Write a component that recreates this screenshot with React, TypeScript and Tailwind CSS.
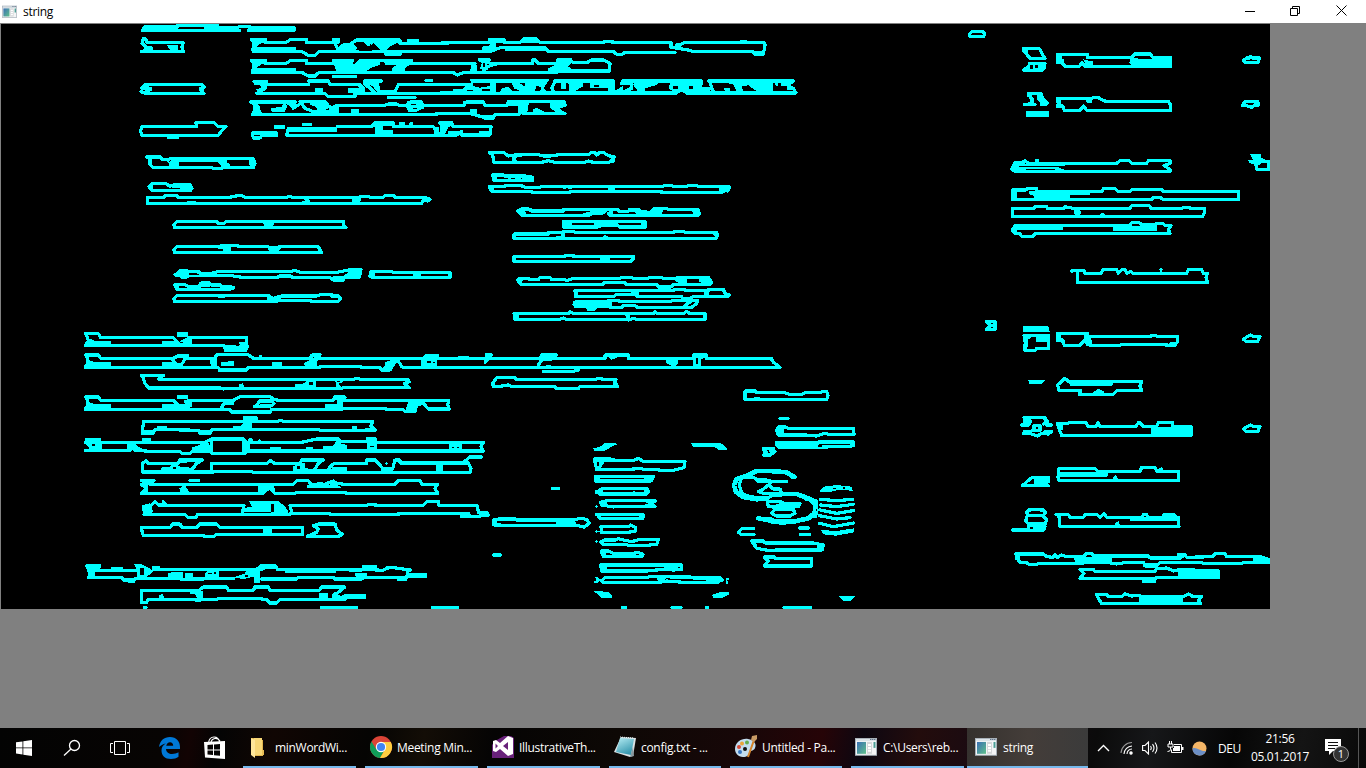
import React from "react";

type Region = { x: number; y: number; lines: string; fills: string; bold?: string; holes?: string };

// Contour data, stored per region at three units per pixel.
const regions: Region[] = [
  {
    x: 0, y: 0,
    lines: "M428 91L434 81H532V77H652V82H712L720 79H745L757 83H882V91H745M428 91H718 M424 154H550L546 141L550 128H442L436 116H430L426 130L440 142L455 146 M755 119H797V127H859L871 119H920V127H1000M757 119L763 135L757 150M760 154H905L925 166H945L957 154H1350 M1000 118H1015V127L1005 130L1012 145L1020 152M1010 152L1030 135L1050 133L1070 120H1200V131H1335L1350 128M1225 122H1252M1155 162H1202 M755 182H797V190H859L871 182H920V190H1000M757 182L763 198L757 213M757 217H905L925 228H945L957 217H1350M1000 181H1058L1050 190L1065 200L1080 181H1150H1235V190H1350M1000 229H1066 M423 275L440 281H612L602 270L613 262L605 254H435L425 264L450 268 M762 244H800V254H925M800 250L795 265L770 280H975L985 290H1065V280H1350M925 243H985L990 254H1080L1090 265L1085 280M1092 243H1145M1095 243L1110 265L1122 275M1130 243L1137 275H1185L1195 254H1350M1278 241H1294M1165 293H1245 M752 306H885L878 320L865 310M755 308L775 320L757 343H1310V340H1350M900 304H975L985 318L995 325L1010 316H1155L1165 312H1190L1200 317H1350M885 306L880 325L905 308M905 310L915 325L940 335H1005L1015 318 M426 380H590L588 368H642L655 380H678L662 396L655 406H425L422 392ZM505 413H532 M757 399H830V406H785L780 414H760ZM862 406H1350M865 386L860 404M1012 380H1115L1125 369H1180V380H1300L1310 395L1305 406M1145 370V400M1320 370H1350M1335 372L1325 395L1318 404",
    fills: "M612 76H655V80H714V95H612ZM743 80H818V86H824V79H886V95H743Z M430 135L458 140V155H425L432 146ZM500 135H535V150H510Z M755 115H797V130H785L770 140H760ZM757 142H888V150H905V156H757ZM1020 152L1030 136L1060 130L1072 145L1065 155ZM1068 115H1200V125L1170 140L1160 150H1140L1120 130L1105 140L1085 122Z M755 178H797V193H785L770 203H760ZM757 205H888V213H905V219H757ZM1005 185H1055L1065 198L1080 178H1140V195L1110 205L1100 213H1010L1003 198ZM1150 178H1235V190L1215 205V213H1175V205L1190 195L1155 195Z M423 258L455 260V272L440 280H425L440 268ZM598 262H612V283H600Z M760 240H800V262L780 275L765 270L785 262L780 255H762ZM945 265H970V280H945ZM1045 265H1095V280H1045ZM1065 248H1080L1095 265H1080ZM1090 240H1145V250H1130L1137 275H1130L1118 258L1110 255L1100 265L1090 255Z M760 318L778 320L785 338H757ZM812 325L845 320L852 308L862 318L855 335H815ZM930 305H975L985 325L960 338L945 320L930 315ZM985 315L1018 322V338H990ZM1052 328H1077V340H1052ZM1220 305L1235 300H1265L1272 310V325L1245 337H1225L1218 320Z M785 394H832V408H785ZM822 375H855V388H822ZM905 370H937V378H905ZM862 380H1012V395H865ZM1125 385H1150V390H1180V405H1125ZM1120 365H1180V378H1150L1145 390H1130L1120 375ZM1198 365H1215V380H1198ZM1230 367H1240V382H1220ZM1300 380H1318V402H1305Z",
    holes: "M1234 311H1252L1244 315H1234ZM1240 324H1252V328H1240ZM1112 130L1116 142L1108 140ZM777 133h6v6h-6ZM1098 136L1116 142V152H1078L1082 140Z",
  },
  {
    x: 440, y: 20,
    lines: "M0 70L15 67H148V58H192V68H240L252 57H290L300 67H490L495 64H518V67H693V82L720 86L745 90L760 95H938L945 102H970L975 75L972 67H735L720 75H708M0 95H150L180 83H315L325 94H520L530 103H545L555 97H705M905 64H918 M0 130H105L95 152M0 158H40L52 165L70 158H350V153H508L510 130L490 120H455L440 128H400L390 118H355V130H295L285 120H278V130H150M118 120H148L135 130L140 145L130 152 M0 193H95M0 219H708L725 208L740 219H1068L1060 205L1045 198M345 183H522M345 183L335 205L345 219M548 183H785M545 190L575 190V205L545 218M785 183L780 205H810M805 183H1060M808 183L820 215 M0 257H70L80 245H130L135 257H200L205 245H372L375 255L345 265L375 281H255L262 250M0 281H90L125 290L135 295H160L165 283H235L260 270 M0 308H35L40 320H153L150 345H65V335L50 345L0 346M20 320L10 340",
    fills: "M147 53H192V68H170L165 90H125V80L150 76ZM250 52H290L295 68H232L250 62ZM195 82H315V94H195ZM935 94H975L970 106H940Z M115 115H148V125L140 135H175L140 145L132 153L120 145L125 130ZM92 135H110V155H92ZM350 115H395V130L385 140L400 150H510V158H325V145L345 135Z M90 178H328L320 190L310 205L330 220H40V208H65L80 195L95 190ZM362 184H378V206H362ZM385 188H428V200L405 213H388ZM450 190H510V203H450ZM502 180H525V212L548 198V220H505ZM583 180H660L650 195L615 205V215H595L580 195ZM690 190L720 180H785L778 200L810 205V213L750 215H700L685 205ZM850 203H870V215H855ZM877 190H1000V213H950L935 203L925 196L905 200L910 215L890 213ZM850 180H930V194H890L850 188ZM995 180H1060V190L1050 195L1060 210H1040V198H1010Z M90 268H112V282H90ZM68 242H132V252H68ZM125 285H165V296H130ZM202 242H260V275L250 285L235 280V258H202ZM330 245H375V250L360 262L365 275H345L330 262ZM278 280V270L290 263L320 278V283Z M0 305H37V318L15 322L8 345H0ZM25 333H65V345H25ZM118 332H150V348H118Z",
    holes: "M100 190H150V198L120 203L100 198ZM168 188H215L222 205L238 212H215L205 200L185 205L180 215H168ZM240 190H255V200ZM75 212L100 210V214ZM290 196L305 204L300 214H285ZM125 208H150V214H125ZM462 195H478V200H462ZM700 198H715V206H700ZM748 198h12v8h-12ZM1015 190h7v8h-7Z M128 130h8v10h-8Z",
  },
  {
    x: 960, y: 0,
    lines: "M28 103L35 95H70L74 103L70 110H30Z M190 146H238L255 176H212L190 150M190 210H245L255 190H210L205 200Z M292 164H383V173H515L525 162H572L578 172H632V199H375L365 188L358 199H315L305 185L292 188Z M850 181L860 174H868L872 169L878 174H898L894 187H855Z M205 281H243L248 295L262 308L258 314H245M205 282L215 298L212 312L193 313H225 M292 296H395L400 293H415L430 302L440 304H625L632 315V331H380L370 318L360 331H313L308 318L292 320L295 310Z M847 316L855 305H893L896 315H885L875 322L863 318Z M155 508L165 488H185L195 482L205 490H470L480 482H508L515 490H560L565 482H630V490L612 497L630 508V514H165Z M890 508H926V485H900L888 495Z M157 570H195L205 565H230V575H425L430 566H465L475 575L510 575L515 569H605L610 574H836V598H610L600 592H580L575 598H157Z M157 626H220L225 620H260L262 626H310L315 620L345 626H510L515 617H568L575 626H665L670 622H690V626H734V638L728 649H157Z M425 645h6 M165 677H510L515 668H538L545 674H585L590 671H610L615 677H633L625 688L630 700H225L220 709H185L180 700H165L157 690Z M335 813L345 812H372L375 820H422L430 809H470L475 820L485 809H495L500 820L512 815L520 820H680L685 809H725L730 820H742L738 832L743 847H352V815",
    fills: "M186 143H205V165L212 178L200 172ZM205 187H258V205L248 215H188V205L208 198Z M510 172L545 177H632V202H520L508 190ZM290 162H305V178H312V195L305 195L290 185ZM370 178L400 185V202H380Z M200 280H212L222 298L224 312H195L212 305L215 295L200 290ZM232 283H245L250 298L265 308V315H248L232 298ZM198 334H267V350H198Z M290 294H303V310L312 325H305L290 318ZM378 295H397L395 310H380Z M160 488H185L200 492L290 492L320 485H338L325 495L290 500L315 510V516H165L155 508ZM226 478h12v8h-12Z M870 463H903V472L915 478V484H928V490H905L890 500L885 495L870 490L863 480H880Z M155 566H172V600H155ZM208 572H390V585H330V600H222V588L208 583Z M340 632L352 625L365 637L355 648H345Z M160 678H308V690H172V702H160ZM460 677H590V692H460Z M601 803h4v14h-4ZM598 806h10v4h-10Z",
    holes: "M211 194H218V206H211ZM225 195h10v10h-10ZM178 499H295V502H178ZM198 507H285V510H198ZM390 178H510V182H390Z",
  },
  {
    x: 130, y: 145,
    lines: "M50 36H90L95 42L115 45L120 40H160L200 41H370L375 55L370 68H280L275 71H250L245 68H70L60 58V42Z M57 125L67 115H105L120 123L135 119H180L186 130L182 136H67Z M53 158H100L105 152H140L145 157H300L310 154L335 151L345 157H470L475 154L490 157H600L685 159L690 154H715L720 157H760L765 151H790L795 157H885L900 163L893 168L880 165L875 176H53Z M133 247L132 240L140 230H260L265 236L282 235L287 230H640V243L648 247Z M133 322L132 315L140 305H260L285 301H322L325 305H415L425 312L440 308L450 305H565L570 315L575 322Z M135 390L150 378L165 376L180 380H205L215 386H250L262 380H480L495 376L510 382H620L640 378L660 374H693L688 396H645L640 405H610L600 398H490L480 393H450L440 398H345L330 396L315 394L300 391H180L170 396H155L150 390Z M722 382L725 380H785L790 383H960M722 382L720 394L728 397H960V383 M135 420L145 419H165L180 426H208L213 414H238L245 420H270L275 425H300L311 428L300 433H140Z M133 469L132 462L140 452H415L430 460L455 453H560L570 449H605V453H625L632 461L625 469H545L540 466H450L440 469Z",
    fills: "M118 37H160L200 40H290V52L300 58V66H275L265 52H148V62L135 68H120L115 52L125 46ZM358 42L377 48V62L368 70L357 58Z M125 121L155 117L187 123L190 133L150 136V128H125ZM55 125L68 115V135Z M665 158L690 155L695 165L685 172V178H668ZM520 160H535L542 172V178H512V170L525 168ZM882 155L905 163L895 172L880 162ZM172 169h25v6h-25ZM282 170h34v6h-34Z M262 230H285V240H265ZM395 230H432V240L425 245H405Z M262 308L285 300H302V320H280L278 312H265ZM412 308L430 302L455 308L440 322H420Z M130 388L150 375H190L205 382H230L258 378L262 385L240 394H180L170 398H150L148 392H132ZM608 393H640L660 378L695 374L690 398H672L670 388L645 395V408H608ZM718 378H735V398H722ZM848 385H872V398H848Z M133 415L150 420L142 435H135ZM205 418H240V425H205Z M262 450H285V460H265ZM412 452L430 460L442 450L458 456L440 470H412Z",
    holes: "M178 384H198L208 389H178Z",
  },
  {
    x: 480, y: 145,
    lines: "M28 22H70L85 33L95 32L103 30L175 29L190 33H210L240 29H325L335 22H345L350 30L360 22H370L385 32L402 35L400 48L385 52H340L325 48L315 52H225L205 47L185 52H42L38 30ZM108 32L100 42L108 52 M38 90H70L75 93H135L158 97V106H42Z M28 125H70L80 121H120L140 128H175L185 125H548L555 121H575L580 125H618L625 121H650L655 125H747V132L730 140L722 143H545V139H270L268 143H158L155 139H35L30 130Z M112 198L125 192H145L155 198H250V193H412L418 199H445L450 193H475L485 200L510 202L522 190H560L565 194H655L658 207L655 211H390L385 205M112 198L125 211H325L335 206H365L380 195 M250 230H495L497 246H420L412 240H360L352 246H250Z M102 267H205V262H245L250 259H280L285 262H580L585 259H612L615 262H710L712 272L708 280H102Z M102 335H255V331H280V335H460V342L452 349H102Z M112 405L120 400H145L150 404H175L180 397H210L215 404H250L262 406L280 400H420L425 397H455L460 400H505L508 397H545L550 400H585L600 397H685L695 413L690 419H580L572 426H535L530 419H440L432 412H372L368 419H125Z M285 437H580L585 433H612L617 437H680L685 433H730L735 445L748 450L745 454H640L630 461H608L605 454H470L465 449H408L402 455H287Z M385 466H415L420 470H570L578 466H653L650 475L635 487H612L620 478L632 470M390 487H425L430 482H465L472 487H615 M102 506H265L270 500L280 506H520L525 500L532 506H610L620 499L630 506H675V523H470L460 520L445 525L438 523H260L250 519L240 523H105ZM440 508L446 520",
    fills: "M95 32H112L105 42L115 52H95ZM385 28L406 36L400 52H385L392 40Z M105 96H158V105H140L125 100L105 106ZM36 88H50V108H36ZM84 98h10v5h-10Z M385 125H405V140H385ZM718 125H748L735 138L728 145H718ZM28 122H42V142H30ZM248 127h10v4h-10ZM265 128h12v4h-12ZM738 138h8v3h-8ZM741 135h3v9h-3Z M108 198L125 190H155V198H135L140 212H120ZM308 205L335 198L340 195H375L365 208H330L325 214H310ZM388 198H398V213H388ZM445 190H480V200H490L498 205L520 200V190H560L548 198L545 208H480L465 205V200H445ZM635 192H660V212H640Z M248 227H275V250H248ZM342 230H362V248H350L342 240ZM482 228H498V250H485Z M367 275L375 269L385 276ZM690 262H715L710 280L700 270ZM240 260H255V283H245ZM228 273h14v5h-14Z M360 335H390V350H360Z M108 406L120 398H145L125 408L130 420H122ZM585 400L600 395H620V413L605 418L587 410ZM655 396H685L697 412V421H675L658 410Z M453 436H477V450H453ZM670 437H690L685 450H672ZM283 435H295V457H287ZM728 435L755 450L748 458H725L735 450Z M280 468L290 465H380L395 463V490H350L345 497H322L318 490H285L277 480Z M98 503H115L120 525H105ZM435 506H452L446 520ZM228 518H255V524H228Z",
  },
  {
    x: 70, y: 325,
    lines: "M47 26H85L92 38H310L325 55M355 37H530V60L533 65H510M47 61H462M50 30L55 48L47 60 M47 90H85L92 100H310L320 95H350L340 110L335 118L320 118L308 105M345 100H435L440 89H535L550 100H720L730 88H750L738 105L735 122M735 100H1290M47 128H445L450 135H530L535 127H750V124H870L875 127H930L935 135H960L970 110L985 108L995 125L1005 128H1290M50 95L55 112L47 125M440 92L425 115L435 127M572 94V100M1168 97H1192 M215 152H280L265 162M268 163H850L862 160L870 163H1012L1018 170L1003 176L1018 188H820L815 190H480L460 192L450 189H235L225 175L218 155 M47 216H85L92 226H310L325 240M355 226H490L510 215H600L610 222L625 226H790L795 216H825L820 226H1020H1136L1133 240L1138 252H1075L1060 235L1040 240L1035 260H1005L1000 254H950L945 250H815V253H605L600 262H485L480 253H47M50 220L55 238L47 250M555 245L570 228H605L612 235L605 242H575M555 245H600 M217 318L220 295V290H525V280H560L545 290H620L630 286L645 290H908L903 303L915 315L755 317L745 314H425L420 325H390L385 316L300 314H255L250 325H217Z M47 352H405L425 342H520L530 352H695L740 342H805L812 350H890L893 340H915L918 352H1240L1233 365L1240 378H525V385H425L415 365L408 352M47 377H180L190 365L200 375L215 377L250 380H330L335 385H360L368 378H420M425 345V380M522 345V380M537 345h8M568 348v4 M218 440V415L228 408L235 415H325L330 405H398L380 415L365 435L335 430M218 441H410L545 439L550 442H1200L1203 430L1195 415L1185 408L1200 396H1235M425 435V416H590L600 406L615 416H690L695 405H760L745 415L735 432M770 440L785 420L795 415H890V405H915L925 415L940 432H968L975 405H990V414H1190 M215 467H252L240 478H670L680 467H715L720 475L745 485L790 468L800 475L825 478H975L985 467H1050L1055 478H1103L1095 490L1103 505H830L825 502H680L675 505H615L600 490L590 495L580 505H215L230 490L215 480M360 466H385 M225 568L220 545H240L255 530L265 540H290L280 530M285 542H522L518 560M222 568H345L355 578H378L382 568H660V565H780V568H985V565H1195L1200 575H1175H1215L1255 570L1250 562H1225L1222 542H1130L1105 540V530H1070L1060 541H925L900 538L885 542H660L665 562 M215 608H300L308 597H330L335 607H380L390 597H440L450 607H697V628H440L430 635H402L400 631H220L215 615ZM585 608V628H695M730 602L745 597H795L800 615L817 628L805 634H712L740 622L745 612Z M50 723H90M55 736H200M55 757H155L160 765H195V760H335V763L490 760M250 733H560L575 721H615L622 733H640L875 735M575 762H680L685 757H790L795 762H875L880 758H1010L1015 735H1022L970 728L950 729L940 736L880 733 M215 832V797H385L400 786H470L475 796H550L555 786H595L600 796H748L755 786H825L810 798L795 810L825 823H630L620 834H600L590 824L560 820H445L440 823H235L230 832H215 M224 847h4M755 847H860M1088 847H1162",
    fills: "M50 38L70 45L75 48H122V62H50ZM275 48H320V60H275ZM320 22H355V35H320ZM345 40H367V60H325V52ZM458 60L510 62L505 50H530L538 65L530 80H462Z M50 102L75 112H122V124H50ZM275 112H320V126H275ZM605 112H635V125H605ZM452 110H470L493 108V124H452ZM702 115L730 98H740V124H705ZM945 112L970 103L985 105L965 135H935L945 120ZM1052 105L1065 88H1108V98L1102 105V122H1052ZM420 105L440 98V122H422ZM320 88H357V98L340 100H320ZM1245 88h22v6l-18 22h-8ZM718 86h35v10h-30ZM445 130H532V140H445Z M508 178L518 175L524 188H508ZM676 176H700L712 165H738V188H676ZM795 165L805 172L815 165L820 170L805 177L815 188H800Z M50 228L75 238H122V250H50ZM275 238H345L340 225H367V245L350 252H275ZM320 211H355V223H320ZM450 245L460 230L492 226V240H465L460 252H450ZM485 256H605V265H485ZM766 238H800V226L820 222V250H766ZM1015 228H1060L1045 235L1030 260H1005ZM788 212h38v14h-38ZM550 240h25v10h-25Z M215 315H255V328H215ZM260 302H292V313H260ZM385 315H425V328H385ZM488 302H512L525 292V275H560V285L545 295V312H488ZM845 302H862V313H845ZM518 274H562V286H518Z M45 338H92V350H95V375H62L48 358ZM172 352L190 350L200 362L218 372V382H195L185 372H170ZM365 368L415 350L420 378H365ZM600 366H632V378H600ZM707 366H728V378H707ZM760 362H790L800 345H812V355L830 360V375H760ZM890 338H915V352L922 358V375H892ZM1138 357H1175V376H1138ZM217 338h25v10h-25ZM520 352L540 355V375H520Z M272 428L300 425L305 418H320L330 425H358V440H272ZM325 402h35l-10 12h-25ZM668 425L690 415H705V430L740 432H830V443H670ZM1098 416H1120V440H1098ZM888 402H920V412H888ZM970 402h22v10h-15ZM932 415l10 12v14h-10ZM785 425h45v15h-45ZM948 411h3v9h-3ZM945 414h9v3h-9Z M210 475L235 465H250L235 480V500L215 505L228 492ZM328 490L345 480L357 500H330ZM565 482H610L618 500L595 492L582 505H565ZM712 480L750 470L780 480L795 465L800 480L812 485V490H712Z M218 540L240 535L250 560L235 568H222ZM537 527H625L645 545L655 560V570H625L600 562H515V550L545 545Z M582 610H605V630H582Z M48 718H93V728L75 740V752L55 755V738L48 730ZM122 725H160V735H122ZM193 718H215L235 728L250 738L245 745L230 755H200V735ZM245 722h25v8h-25ZM155 760H195V775H178ZM295 745L310 740H340V758H295ZM345 745H368V758H345ZM405 745L415 735H448V758H405ZM490 758L525 745L530 735H560L570 720H620V732H590L570 740V775H552V755L520 762ZM645 735H797V745H645ZM855 745H890L895 758H858ZM875 720H920V733H875ZM980 755H1012V768H980ZM1015 745H1070V758H1015Z M268 810L278 807L285 822H268ZM358 797H400V820L390 832H375V823H385L375 808H360ZM748 805H775V820H748ZM785 808L795 800L805 815L825 808H887V821H785Z",
    holes: "M1070 107h14v8h-14ZM1090 110h6v5h-6Z M716 171h14v10h-14Z M66 358h8v4h-8ZM900 363h12v4h-12ZM1145 366h8v4h-8ZM1162 366h6v4h-6Z M308 427h10v4h-10ZM680 424h10v8h-10Z M603 536h10v24h-10Z M211 730h10v20h-10ZM415 743h12v5h-12ZM432 741h6v6h-6ZM525 750h8v6h-8Z M330 50h8v4h-8Z",
  },
  {
    x: 480, y: 345,
    lines: "M0 40H20L35 30M35 40H180L185 30H230L215 42L185 45L175 60M215 40H375V30H445V40H640V30H680V40H875L880 52L900 67H290M0 67H290L295 75L280 79H190M202 64h6 M38 115L50 98H105L108 104H345L352 100H365L368 104H408L406 115L413 124H300L295 131H228L225 125H95L85 120L60 124H40Z M795 138H825L830 143H915L930 149H965L975 143H1020L1030 139H1040L1044 152L1040 163H795Z M835 160H825 M900 220H924 M890 255L895 246H915L925 250H1120L1122 268H1045L1035 265L1010 273L975 270H895Z M1015 291H1120V302L1100 305H1030 M850 310H880V320H885L870 330H850L860 322Z M343 342H390L395 347H460L475 340L490 349H615L612 368L580 376H545L520 373H490L480 370L440 374H350Z M347 394H520L513 408H347Z M352 442L365 431H502L506 440L500 447H360L352 442 M362 472L380 467H525L510 475L525 484H420L400 486L365 480Z M352 508H440L490 510L488 521H362L352 510 M363 545H445L452 540L467 548V558L440 563H365Z M362 590L375 585H405L415 581L430 585L455 590L480 583H535L530 598L490 602H445L440 598H370Z M364 618H385L400 625H460L475 622L489 628L485 635H370Z M362 660H605V673H550L500 678H365Z M365 708L375 698H500L510 695H550L580 696H630L640 699H720L726 705L700 712H610L560 708L540 712H370Z M428 788h8M576 787H603M680 788h2M912 787H991 M217 430H236M40 630H63 M42 540L40 525L55 522H105L110 525H280L300 520L320 523L328 535L312 546L290 541H95Z M785 395L778 420L785 445L810 455L850 460M790 398L820 398L850 410H920M835 440L850 432L865 420L880 432H900L905 445H850Z M855 462L880 450M862 470H900L920 477L960 475L955 485H865ZM875 505L885 493H940L945 505L930 513H890ZM905 477L880 487M870 415L860 425 M1022 463L1070 467L1118 463M1022 480L1070 485L1120 478M1020 495L1070 505L1120 497M1018 512L1070 522L1110 518M1018 535L1060 545L1120 534 M820 551H785L775 562L785 569H822M959 549H986M962 569H988 M815 588H850L855 594H1000L1030 600L1025 615H890L870 617L830 610Z M853 636H885V641H995V663H853L863 650Z",
    bold: "M943 396L920 382L870 378H830L800 392L770 402L762 420L768 441L790 456L830 463L860 460M880 450L910 447H950L990 462L1008 480L1003 505L985 520L940 530H915L880 528L835 520",
    fills: "M180 26H232V36L205 45H180ZM372 27H447V36H415L395 44L385 36H375ZM555 42H593V58L580 66L560 55ZM637 28H680V38L662 42V62H640ZM865 40L905 65L890 68ZM15 25h22v8l-18 20h-8Z M398 102H412V127H398ZM36 108h10v18h-10Z M888 245H912V270H890ZM885 287H1050V292H1030L1015 300V306H1045V312H895L885 300ZM845 305H862V318L850 330ZM865 310h14v14h-10Z M340 310L360 305L375 294H408L410 299L400 302L375 317H342ZM632 294H722L742 310V314H715L705 307H640Z M340 338H405V350H375L362 370V376H348L340 350Z M343 392H365L355 412H343ZM485 392H528L515 410H492V398H485Z M345 435H370V447H345ZM440 444L465 438L470 448H440ZM490 430h18v14h-14Z M358 470H380V483H362ZM480 465H530V472L515 478L530 483H485L505 475ZM345 482h10v4h-10ZM348 479h4v10h-4Z M345 505h15v8h-15ZM475 508h18v14h-14Z M345 558h20v3h-20ZM348 555h4v9h-4ZM345 588h9v3h-9ZM348 585h3v9h-3Z M362 615H378V638H368Z M360 657H380V678H365ZM555 660H585L600 672L580 682L565 675H552ZM440 672h50v5h-50Z M530 697H560L550 712H535ZM672 708L700 700L690 697H725L728 708L715 716H675ZM345 695h7l8 10l-8 10h-9v-8h4v-5ZM355 703h12v6h-12ZM738 700h8v6h-4l4 12h-8ZM600 712h90v6h-90Z M338 737H370V742H385L395 752V758H362L350 745ZM696 750L718 742H748V748L725 759H700ZM1078 754H1125L1110 768H1090Z M225 525h60l5 15h-60ZM38 525h15l-8 18h-8Z M800 385L830 373H900L950 390L945 402L935 402L920 385H830L800 395ZM815 398H850L875 404H925L915 415H835Z M828 515H870L900 528L940 522H985L960 532L910 540L870 535ZM955 445L1015 465L1012 520H1000V470L975 468Z M1018 438L1030 425L1070 420L1115 425L1118 437L1075 435L1045 442H1020ZM1022 555L1070 558L1122 550V562L1068 572L1030 568Z M812 585h15l5 22h-10ZM1012 593H1033V618H1012Z M850 632h12l8 15l-10 18h-10l8-15Z",
    holes: "M647 40h8v18h-8Z M352 350h5v14h-5Z M766 420h6v4h-6ZM1007 492h5v6h-5ZM1060 429h8v4h-8ZM1088 427h6v6h-6Z",
  },
  {
    x: 960, y: 310,
    lines: "M192 76H266V115H230L225 122H195V105L200 92Z M292 71H383V79H570L580 76L595 79H652V95L645 106H620V103H485L480 106H390L375 90L360 106H313L308 90L293 92Z M850 88L862 80L872 75L880 80H900L893 94H858Z M293 225L315 205L325 214H545L540 228L545 241H472L460 253H358L362 241H297Z M192 322H255L262 335L250 342M185 345H205L212 335M258 345H275M190 370H205L220 360M255 365H275L265 372L245 370M215 372L232 378L245 370M222 346H240V362H222Z M292 340H320L330 338H378L383 349H408L414 337L420 349H528L535 338H540L550 349H590L595 338H638V349H693V377H305L297 355Z M850 357L862 350L872 345L880 350H900L893 365H858Z M295 490L297 475H405L415 485H540L545 472H585L590 484H655V511H297L293 500L305 495H440 M187 527L215 503H265V515L250 518L265 527Z M205 600H250L257 608L250 616H205L200 608ZM200 620L197 632L205 642H255L260 630L250 618M205 650H255L250 660H157 M288 614H325L330 622H370L375 614H412L420 622L432 610L440 622H545L550 614H560L565 622H608L612 614H643L648 622H655V648L657 649H300L297 620 M167 732H250L260 740L278 742L285 735L292 742L305 735L320 740H370L380 730H395L402 738H565L570 744H660L675 735L680 742L758 740L765 731H795L800 740H900L925 748V757H850L845 760H730L725 757H600L590 768H555L550 757H500L470 762L440 757L320 760H235L230 764H208L200 758H180L170 740 M360 778H400L405 785H585L590 776L620 774L640 783L660 778H700V783H775V802H590L580 815H550V805H360L372 790Z M410 853H440L445 860H485L495 852L515 858L535 856L545 860H670L685 852L700 860H725L715 870L722 881H425L415 865Z",
    fills: "M75 31H107L111 35V58L107 62H75V55L83 46L75 39Z M190 49H265L269 65H188V52Z M188 73H215V82L205 88V110H192ZM228 78H268V95H228Z M290 68H304V82L312 98L305 98L290 90ZM372 76H385L395 90V108H380L370 95ZM632 95h20l-4 14h-26Z M205 211H254L245 223H208Z M325 212H467L455 227H330ZM397 248L415 236L432 245V255H397Z M190 320H215L208 340L190 338ZM190 360H215V374H188ZM245 322l20 15h-10Z M290 338H308V360H300L290 352ZM572 352H695V378H572Z M300 487H445V496H300ZM590 482L605 470L615 488H590ZM460 500L468 495L476 510H460Z M222 503H265V515L250 518L265 525H222Z M200 642H258V660H200Z M507 622H640V614H650L658 635L650 642V632H510ZM610 612H645V628H610ZM465 640L475 633L482 648H467Z M165 728H180V755L165 748ZM340 740H455V756H345ZM552 758H593V772H552ZM650 730H675V740H650ZM880 744H925V762H905L880 752Z M655 783H778V804H655ZM548 800H588V818H548Z M537 860H668V882H537Z",
    holes: "M92 38h6v4h-6ZM92 50h6v4h-6Z M305 480h42v3h-42ZM360 480h25v3h-25Z M210 652h8v4h-8ZM212 603h28v3h-28Z M228 352h6v5h-6Z",
  },
];

function Contours() {
  return (
    <svg className="block" width="1269" height="585" viewBox="1 24 1269 585" shapeRendering="crispEdges">
      {regions.map((r) => (
        <g key={`${r.x}-${r.y}`} transform={`translate(${r.x} ${r.y}) scale(0.333333)`}>
          <path d={r.lines} fill="none" stroke="#00ffff" strokeWidth="9.7" strokeLinejoin="round" strokeLinecap="round" />
          {r.bold && <path d={r.bold} fill="none" stroke="#00ffff" strokeWidth="14" strokeLinejoin="round" strokeLinecap="round" />}
          <path d={r.fills} fill="#00ffff" />
          {r.holes && <path d={r.holes} fill="#000000" />}
        </g>
      ))}
    </svg>
  );
}

function AppIcon({ size }: { size: number }) {
  return (
    <svg width={size} height={size * 0.9} viewBox="0 0 22 20" preserveAspectRatio="none">
      <defs>
        <linearGradient id="panel" x2="1" y2="1"><stop stopColor="#3b6fb5" /><stop offset="1" stopColor="#5fc08a" /></linearGradient>
      </defs>
      <path fill="#a9b2ba" d="M0 1h22v18H0z" />
      <path fill="#f4f5f6" d="M1 4h20v14H1z" />
      <path fill="#dce4ea" d="M1 2h20v2H1z" />
      <path fill="#63758a" d="M15 2h1.500v1H15zM17 2h1.500v1H17zM19 2h1.500v1H19z" />
      <path fill="url(#panel)" d="M2 5h9v12H2z" />
      <path fill="#d4d6d8" d="M12 5h5v12h-5z" />
      <path fill="#fff" d="M13 7h3v2h-3zM13 10h3v2h-3zM13 13h3v2h-3z" />
      <path fill="#4c9f96" d="M18.500 5h2v6h-2z" />
    </svg>
  );
}

function FolderIcon() {
  return (
    <svg width="24" height="24" viewBox="0 0 24 24">
      <path fill="#e2b54d" d="M4 3h11v2h1v16H6z" />
      <path fill="#f8d777" d="M7 3h8v17H7z" />
      <path fill="#ffe69a" d="M4 3l4 2v18l-4-3z" />
      <path fill="#e9bd56" d="M15 15h2v5h-2z" />
    </svg>
  );
}

function ChromeIcon() {
  return (
    <svg width="24" height="24" viewBox="0 0 24 24">
      <circle cx="12" cy="12" r="11" fill="#db4437" />
      <path fill="#0f9d58" d="M2.500 6.500A11 11 0 0 0 11 23l5-8.500-4-2.500-5 2z" />
      <path fill="#ffcd40" d="M12 7h9.800A11 11 0 0 1 11 23l5-8.500z" />
      <circle cx="12" cy="12" r="5.200" fill="#fff" />
      <circle cx="12" cy="12" r="4.100" fill="#4285f4" />
    </svg>
  );
}

function StudioIcon() {
  return (
    <svg width="24" height="24" viewBox="0 0 24 24">
      <path fill="#68217a" d="M1 10l3-4 9-5h7l3 2v20H1z" />
      <path fill="#fff" fillRule="evenodd" d="M17 1l5 2v16l-5 2-8-7-4 3-3-1V6l3-1 4 3zM4.500 8.500v5L7 11zM17 7l-5 4 5 4z" />
    </svg>
  );
}

function NotepadIcon() {
  return (
    <svg width="24" height="24" viewBox="0 0 24 24">
      <defs><linearGradient id="pad" x2=".5" y2="1"><stop stopColor="#b6edf4" /><stop offset="1" stopColor="#3798af" /></linearGradient></defs>
      <path fill="#dce2e4" d="M8 2l15 1-3 18-3 1-16-5z" />
      <path fill="url(#pad)" d="M7 3l14 1-3 16-15-3z" />
      <path fill="none" stroke="#e8fafc" strokeWidth="1" strokeDasharray="1 1" d="M7 2l14 1" />
      <path fill="#87989e" d="M20 12l1 9-4 1z" />
    </svg>
  );
}

function PaintIcon() {
  return (
    <svg width="24" height="24" viewBox="0 0 24 24">
      <path fill="#c3ddef" d="M1 14C1 7 8 3 14 4c6 1 9 5 7 9-1 3-4 2-5 4-1 3-3 5-7 5-5 0-8-4-8-8z" />
      <circle cx="5" cy="12" r="2" fill="#d74a38" /><circle cx="8" cy="8.500" r="2" fill="#e9a438" />
      <circle cx="13" cy="7.500" r="2" fill="#64ad4d" /><circle cx="6" cy="17" r="2" fill="#3776c3" />
      <circle cx="11" cy="14" r="2" fill="#111" />
      <path stroke="#d58328" strokeWidth="2" d="M20 5l-6 17" />
      <path fill="#c99b65" d="M18 1l5-1v4l-3 3-3-2z" />
    </svg>
  );
}

const tasks = [
  { label: "minWordWi...", icon: <FolderIcon />, box: "ml-2 w-[113px] pl-1" },
  { label: "Meeting Min...", icon: <ChromeIcon />, box: "ml-[9px] w-[113px] pl-1" },
  { label: "IllustrativeTh...", icon: <StudioIcon />, box: "ml-[9px] w-[113px] pl-1" },
  { label: "config.txt - ...", icon: <NotepadIcon />, box: "ml-[9px] w-[112px] pl-1" },
  { label: "Untitled - Pa...", icon: <PaintIcon />, box: "ml-[9px] w-[112px] pl-1" },
  { label: "C:\\Users\\reb...", icon: <AppIcon size={22} />, box: "ml-[9px] w-[113px] pl-1" },
  { label: "string", icon: <AppIcon size={22} />, box: "ml-[3px] w-[121px] pl-2 bg-linear-to-r from-[#35312e] via-[#443d39] to-[#3b3b3b]" },
];

function Taskbar() {
  return (
    <footer className="flex h-10 shrink-0 bg-[linear-gradient(100deg,#030303_0,#070403_12%,#120303_14%,#040404_16%,#100603_20%,#050403_27%,#130d06_31%,#050404_36%,#0d0805_45%,#170708_54%,#260407_60%,#0d0711_63%,#230c0c_67%,#170a14_73%,#0b0b0b_80%,#161719_84%,#060606_90%,#141414_95%,#090909_100%)] text-xs text-white">
      <div className="flex w-12 items-center justify-center">
        <svg width="16" height="16" viewBox="0 0 16 16" fill="#fff"><path d="M0 2.300l6.500-.9v6.100H0zM7.300 1.200L16 0v7.500H7.300zM0 8.300h6.500v6.200L0 13.600zM7.300 8.300H16V16l-8.700-1.300z" /></svg>
      </div>
      <div className="flex w-12 items-center justify-center">
        <svg width="18" height="18" viewBox="0 0 18 18" fill="none" stroke="#fff" strokeWidth="1.300"><circle cx="11.500" cy="6.500" r="5" /><path d="M8 10L1 16.500" /></svg>
      </div>
      <div className="flex w-12 items-center justify-center">
        <svg width="20" height="14" viewBox="0 0 20 14" fill="none" stroke="#fff"><path d="M4.500.5h11v13h-11zM3 2.500H.5v9H3M17 2.500h2.500v9H17" /></svg>
      </div>
      <div className="flex w-[50px] items-center justify-center">
        <svg width="21" height="22" viewBox="0 0 21 22"><path fill="#0078d7" d="M0 10C1 3.500 5 0 11 0c6.500 0 10 4.500 10 10v2H7c.2 3.500 3 5 6 5 2.500 0 4.500-.6 6.500-1.700v4.500C17.500 21.200 15 22 12 22 6 22 2.500 18.500 2.500 13.500c0-3.300 1.600-5.500 4.300-7C4 7 1.500 8.500 0 10zm7.200-1.200h7C14.200 6.500 13 5.200 11 5.200c-2 0-3.300 1.500-3.800 3.600z" /></svg>
      </div>
      <div className="flex w-[41px] items-center justify-center">
        <svg width="21" height="24" viewBox="0 0 21 24"><path fill="none" stroke="#fff" strokeWidth="1.200" d="M4.500 7C5 3 7 1 10 1s5 2 5.500 5M7 6c1-4 6-5 9-1" /><path fill="#fff" fillRule="evenodd" d="M0 6l21-1v18L1 21.500zM3.500 9v4.500H9V8.600zm6.500-.4v4.900h6V8zM3.500 14.500v4l5.500.6v-4.600zm6.500 0v4.700l6 .6v-5.300z" /></svg>
      </div>
      {tasks.map((t) => (
        <div key={t.label} className={`flex shrink-0 items-center gap-1 border-b-2 border-[#76b9ed] ${t.box}`}>
          <span className="flex w-6 shrink-0 items-center">{t.icon}</span>
          <span className="whitespace-nowrap pt-0.5 tracking-[-0.3px]">{t.label}</span>
        </div>
      ))}
      <div className="ml-[9px] flex items-center gap-2">
        <svg className="mr-0.5" width="13" height="8" viewBox="0 0 13 8" fill="none" stroke="#fff" strokeWidth="1.400"><path d="M1 7l5.500-5.500L12 7" /></svg>
        <svg width="14" height="14" viewBox="0 0 14 14" fill="none" stroke="#fff" strokeWidth="1.100"><path stroke="#999" d="M1 12A11 11 0 0 1 12 1.500" /><path d="M4 13a8.500 8.500 0 0 1 8-8M7 13a5 5 0 0 1 5-5" /><circle cx="11" cy="12" r="1.200" fill="#fff" /></svg>
        <svg width="17" height="14" viewBox="0 0 17 14" fill="none" stroke="#fff" strokeWidth="1.100"><path d="M.6 4.500H3L6.500 1v12L3 9.500H.6zM8.500 5q1.500 2 0 4M10.500 3.200q3 3.800 0 7.600M13 1.500q4 5.500 0 11" /></svg>
        <svg width="17" height="14" viewBox="0 0 17 14"><path fill="none" stroke="#fff" d="M4.500 8.500v3h10v-8H7M2.500 0v3M4.500 0v3M1 3h5v3H1zM3.500 6v2.500q0 2-3 2" /><path fill="#fff" d="M7 5h6v5H6V7h1zM15 6h1.500v3H15z" /></svg>
        <svg width="15" height="15" viewBox="0 0 15 15"><circle cx="7.500" cy="7.500" r="7" fill="#f5b667" /><path fill="#6c8fc5" d="M.5 7.500C5 5.500 8 11 14 10A7 7 0 0 1 .5 7.500z" /></svg>
      </div>
      <div className="ml-[11px] flex w-6 items-center pt-px tracking-[-0.5px]">DEU</div>
      <div className="ml-[6px] flex w-[64px] flex-col items-center justify-center gap-[2px] text-xs leading-4 tracking-[-0.3px]"><span>21:56</span><span>05.01.2017</span></div>
      <div className="ml-3 flex w-[30px] items-center pt-[3px]">
        <svg width="26" height="26" viewBox="0 0 26 26"><path fill="#fff" d="M1 2h16v12H9l-4 4v-4H1z" /><path stroke="#111" d="M4 5.500h10M4 8.500h10M4 11.500h7" /><circle cx="17" cy="17" r="7.500" fill="#333" stroke="#999" /><text x="17" y="21" textAnchor="middle" fontFamily="Open Sans" fontSize="11" fill="#fff">1</text></svg>
      </div>
      <div className="ml-auto mr-[7px] w-px bg-[#555]" />
    </footer>
  );
}

export default function App() {
  return (
    <div className="flex h-[768px] w-[1366px] flex-col overflow-hidden bg-[#808080] font-['Open_Sans',sans-serif]">
      <header className="flex h-[23px] shrink-0 items-center bg-white pl-0.5">
        <AppIcon size={15} />
        <h1 className="ml-1.5 pt-px text-xs font-normal tracking-[-0.3px] text-black">string</h1>
        <div className="ml-auto flex h-full items-center pr-[19px] pb-[2px]">
          <svg width="10" height="10" viewBox="0 0 10 10"><path stroke="#000" d="M0 5.500h10" /></svg>
          <svg className="ml-[35px]" width="10" height="10" viewBox="0 0 10 10" fill="none" stroke="#000"><path d="M.5 2.500h7v7h-7zM2.500 2.500v-2h7v7h-2" /></svg>
          <svg className="ml-9" width="11" height="11" viewBox="0 0 11 11" stroke="#000"><path d="M.5.5l10 10M10.500.5l-10 10" /></svg>
        </div>
      </header>
      <main className="flex grow items-start bg-[#808080] pt-px pl-px">
        <div className="bg-black"><Contours /></div>
      </main>
      <Taskbar />
    </div>
  );
}
